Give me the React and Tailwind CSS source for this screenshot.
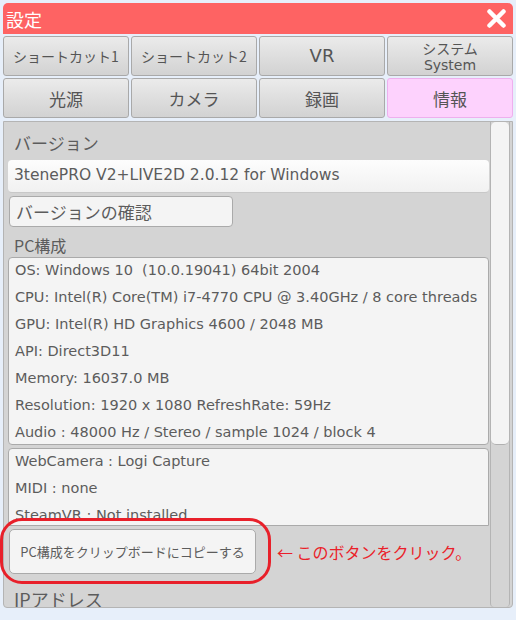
const tabsTop = ['ショートカット1', 'ショートカット2', 'VR']
const tabsBottom = ['光源', 'カメラ', '録画']

const pcInfo = [
  'OS: Windows 10  (10.0.19041) 64bit 2004',
  'CPU: Intel(R) Core(TM) i7-4770 CPU @ 3.40GHz / 8 core threads',
  'GPU: Intel(R) HD Graphics 4600 / 2048 MB',
  'API: Direct3D11',
  'Memory: 16037.0 MB',
  'Resolution: 1920 x 1080 RefreshRate: 59Hz',
  'Audio : 48000 Hz / Stereo / sample 1024 / block 4',
]

const devices = ['WebCamera : Logi Capture', 'MIDI : none', 'SteamVR : Not installed']

const latin = { fontFamily: '"DejaVu Sans", "Noto Sans CJK JP", sans-serif' }

function Tab({ children, active, className = '' }) {
  return (
    <div
      className={
        'h-[40px] flex flex-col items-center justify-center rounded-[3px] border leading-none ' +
        (active
          ? 'bg-[#fdd2fd] border-[#eeb0ee] text-[#555]'
          : 'bg-gradient-to-b from-[#ebebeb] to-[#d2d2d2] border-[#a9a9a9] text-[#555]') +
        ' ' +
        className
      }
    >
      {children}
    </div>
  )
}

export default function App() {
  return (
    <div
      className="relative w-[516px] h-[620px] bg-[#e7effa] pt-[3px] px-[3px] overflow-hidden"
      style={{ fontFamily: '"Noto Sans CJK JP", "Noto Sans", sans-serif' }}
    >
      {/* title bar */}
      <div className="h-[31px] w-[510px] bg-[#fe6363] rounded-t-[5px] flex items-center justify-between pl-[3px] pr-[7px]">
        <span className="text-white text-[18px] leading-none">設定</span>
        <svg width="19" height="19" viewBox="0 0 19 19">
          <path d="M2.5 2.5 L16.5 16.5 M16.5 2.5 L2.5 16.5" stroke="#fff" strokeWidth="4.5" strokeLinecap="round" />
        </svg>
      </div>

      {/* tabs */}
      <div className="grid grid-cols-4 gap-[2px] mt-[2px] w-[510px]">
        {tabsTop.map((t, i) => (
          <Tab key={t} className={i < 2 ? 'text-[14px]' : 'text-[18px]'}>
            {i < 2 ? t : <span style={latin}>{t}</span>}
          </Tab>
        ))}
        <Tab className="text-[14px]">
          <span className="leading-[17px]">システム</span>
          <span className="leading-[16px]" style={latin}>
            System
          </span>
        </Tab>
        {tabsBottom.map((t) => (
          <Tab key={t} className="text-[17px]">
            {t}
          </Tab>
        ))}
        <Tab active className="text-[17px]">
          情報
        </Tab>
      </div>

      {/* content panel */}
      <div className="mt-[3px] w-[510px] h-[487px] bg-[#d4d4d4] border border-[#b4b4b4] rounded-b-[4px] flex overflow-hidden">
        <div className="flex-1 pl-[4px] pr-[1px] text-[#5c5c5c]">
          <div className="h-[38px] pt-[8px] pl-[6px] text-[17px] leading-[26px]">バージョン</div>
          <div
            className="h-[33px] bg-gradient-to-b from-[#fdfdfd] to-[#f1f1f1] rounded-[4px] border-b border-[#c8c8c8] flex items-center pl-[6px] text-[15.5px]"
            style={latin}
          >
            3tenePRO V2+LIVE2D 2.0.12 for Windows
          </div>
          <div className="mt-[3px] ml-[1px] h-[31px] w-[224px] bg-[#f4f4f4] border border-[#aaa] rounded-[4px] flex items-center pl-[6px] text-[17px]">
            バージョンの確認
          </div>
          <div className="h-[30px] pt-[6px] pl-[6px] text-[16px] leading-[24px]">PC構成</div>
          <div className="h-[188px] bg-[#f4f4f4] border border-[#aaa] rounded-[4px] pl-[6px] text-[14.5px]" style={latin}>
            {pcInfo.map((l) => (
              <div key={l} className="h-[27px] leading-[25px] whitespace-pre">
                {l}
              </div>
            ))}
          </div>
          <div
            className="mt-[3px] h-[78px] bg-[#f4f4f4] border border-[#aaa] rounded-t-[4px] pl-[6px] text-[14.5px] overflow-hidden"
            style={latin}
          >
            {devices.map((l) => (
              <div key={l} className="h-[27px] leading-[25px]">
                {l}
              </div>
            ))}
          </div>
          <div className="mt-[3px] flex items-center">
            <div className="ml-[1px] h-[45px] w-[247px] bg-[#f4f4f4] border border-[#aaa] rounded-[5px] flex items-center justify-center text-[13px]">
              PC構成をクリップボードにコピーする
            </div>
            <span className="ml-[21px] text-[16px] text-[#ea1f2a]">← このボタンをクリック。</span>
          </div>
          <div className="mt-[13px] pl-[6px] text-[18px] leading-[24px]">IPアドレス</div>
        </div>

        {/* scrollbar */}
        <div className="w-[20px] mr-[2px] border-x border-[#b4b4b4] bg-[#d4d4d4] rounded-b-[4px] flex flex-col">
          <div className="h-[323px] bg-[#f4f4f4] border-b border-[#b0b0b0] rounded-[5px]" />
        </div>
      </div>

      {/* annotation ring */}
      <div className="absolute left-0 top-[518px] w-[271px] h-[66px] border-[3px] border-[#e8202a] rounded-[22px]" />
    </div>
  )
}
